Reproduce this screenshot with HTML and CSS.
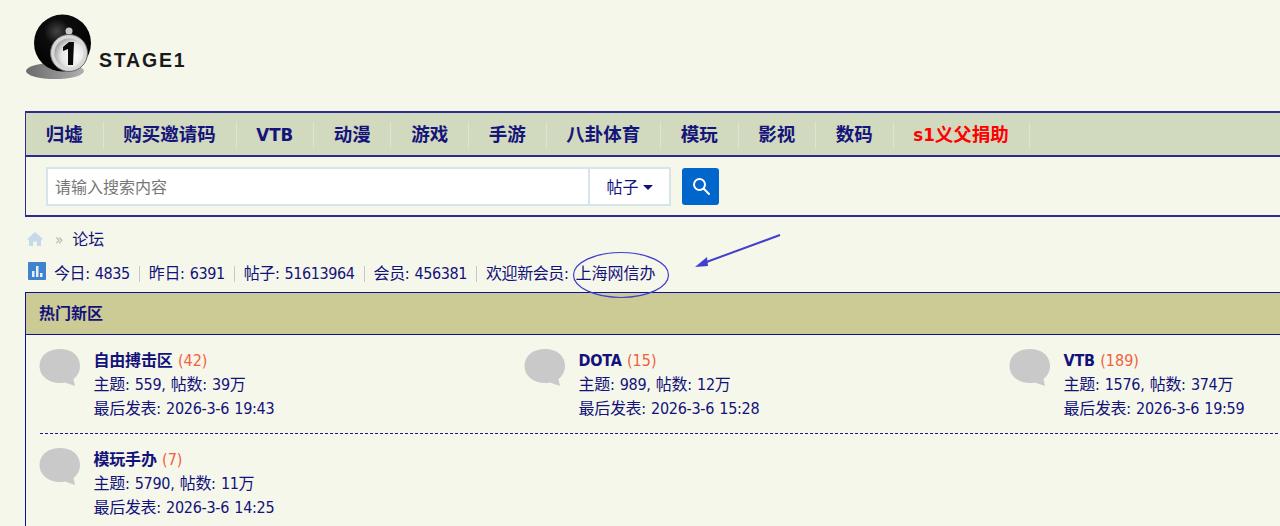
FILE: index.html
```html
<!DOCTYPE html>
<html lang="zh">
<head>
<meta charset="utf-8">
<title>Stage1</title>
<link rel="stylesheet" href="styles.css">
</head>
<body>
<div class="page">
  <header class="logo">
    <svg class="logo-ball" width="70" height="68" viewBox="0 0 70 68">
      <defs>
        <radialGradient id="ball" cx="0.4" cy="0.3" r="0.75">
          <stop offset="0" stop-color="#444"/>
          <stop offset="0.3" stop-color="#0c0c0c"/>
          <stop offset="1" stop-color="#000"/>
        </radialGradient>
        <radialGradient id="face" cx="0.65" cy="0.6" r="0.7">
          <stop offset="0" stop-color="#fff"/>
          <stop offset="0.6" stop-color="#e6e6e6"/>
          <stop offset="1" stop-color="#9a9a9a"/>
        </radialGradient>
        <linearGradient id="shadow" x1="0" x2="1" y1="0" y2="0">
          <stop offset="0" stop-color="#6a6a6a"/>
          <stop offset="1" stop-color="#b0b0b0"/>
        </linearGradient>
      </defs>
      <ellipse cx="30" cy="58" rx="29" ry="8" fill="url(#shadow)"/>
      <circle cx="37.500" cy="30" r="28.500" fill="url(#ball)"/>
      <ellipse cx="44" cy="18" rx="3.500" ry="3.500" fill="#c8c8c8"/>
      <circle cx="44" cy="40" r="18.500" fill="#d8d8d8" stroke="#666" stroke-width="1"/>
      <circle cx="44" cy="40" r="14.500" fill="url(#face)"/>
      <path d="M38 34 L44 29 L49 29 L48 52 L43 52 L43 36 L38 38 Z" fill="#0a0a0a"/>
    </svg>
    <span class="logo-text">STAGE1</span>
  </header>

  <nav class="panel">
    <ul class="menu">
      <li class="menu-item">归墟</li>
      <li class="menu-item">购买邀请码</li>
      <li class="menu-item">VTB</li>
      <li class="menu-item">动漫</li>
      <li class="menu-item">游戏</li>
      <li class="menu-item">手游</li>
      <li class="menu-item">八卦体育</li>
      <li class="menu-item">模玩</li>
      <li class="menu-item">影视</li>
      <li class="menu-item">数码</li>
      <li class="menu-item menu-red">s1义父捐助</li>
    </ul>
    <div class="search">
      <div class="search-box">
        <div class="search-input">请输入搜索内容</div>
        <div class="search-type">帖子<span class="caret"></span></div>
      </div>
      <div class="search-btn">
        <svg width="20" height="20" viewBox="0 0 20 20" fill="none" stroke="#fff" stroke-width="2" stroke-linecap="round">
          <circle cx="8.500" cy="8.500" r="5.500"/>
          <path d="M12.800 12.800 L18 18"/>
        </svg>
      </div>
    </div>
  </nav>

  <div class="crumb">
    <svg class="crumb-home" width="18" height="16" viewBox="0 0 18 16"><path d="M9 1 L17.500 8.500 L15 8.500 L15 15 L10.800 15 L10.800 10.500 L7.200 10.500 L7.200 15 L3 15 L3 8.500 L0.500 8.500 Z" fill="#c5d9ea"/></svg>
    <span class="crumb-sep">»</span>
    <span>论坛</span>
  </div>

  <div class="stats">
    <svg class="stats-icon" width="18" height="18" viewBox="0 0 18 18"><rect width="18" height="18" rx="1" fill="#3f83cc"/><path d="M4 9h2.500v6H4zM8 4h2.500v11H8zM12 11h2.500v4H12z" fill="#e6f0fa"/></svg>
    <span class="stat">今日: 4835</span><span class="stat">昨日: 6391</span><span class="stat">帖子: 51613964</span><span class="stat">会员: 456381</span><span class="stat stat-last">欢迎新会员:<span class="new-member">上海网信办</span></span>
    <svg class="note" width="230" height="60" viewBox="0 0 230 60" fill="none" stroke="#4040cc">
      <ellipse cx="48" cy="37" rx="47.500" ry="22.500" stroke-width="1.200"/>
      <path d="M207 -3 L128 26" stroke-width="2"/>
      <path d="M122 29 L134 19 L135 28 Z" fill="#4040cc" stroke="none"/>
    </svg>
  </div>

  <section class="board">
    <h2 class="board-title">热门新区</h2>
    <div class="forums">
      <div class="forum">
        <svg class="bubble" width="42" height="38" viewBox="0 0 42 38"><path d="M21 0C32.500 0 41 6.500 41 17C41 23 38 27.500 34.500 30L36 37L26 33.500C24.500 34 22.500 34 21 34C9.500 34 0.500 27 0.500 17C0.500 6.500 9.500 0 21 0Z" fill="#c9c9c9"/></svg>
        <div class="forum-text">
          <div class="forum-name"><b>自由搏击区</b> <span class="count">(42)</span></div>
          <div>主题: 559, 帖数: 39万</div>
          <div>最后发表: 2026-3-6 19:43</div>
        </div>
      </div>
      <div class="forum">
        <svg class="bubble" width="42" height="38" viewBox="0 0 42 38"><path d="M21 0C32.500 0 41 6.500 41 17C41 23 38 27.500 34.500 30L36 37L26 33.500C24.500 34 22.500 34 21 34C9.500 34 0.500 27 0.500 17C0.500 6.500 9.500 0 21 0Z" fill="#c9c9c9"/></svg>
        <div class="forum-text">
          <div class="forum-name"><b>DOTA</b> <span class="count">(15)</span></div>
          <div>主题: 989, 帖数: 12万</div>
          <div>最后发表: 2026-3-6 15:28</div>
        </div>
      </div>
      <div class="forum">
        <svg class="bubble" width="42" height="38" viewBox="0 0 42 38"><path d="M21 0C32.500 0 41 6.500 41 17C41 23 38 27.500 34.500 30L36 37L26 33.500C24.500 34 22.500 34 21 34C9.500 34 0.500 27 0.500 17C0.500 6.500 9.500 0 21 0Z" fill="#c9c9c9"/></svg>
        <div class="forum-text">
          <div class="forum-name"><b>VTB</b> <span class="count">(189)</span></div>
          <div>主题: 1576, 帖数: 374万</div>
          <div>最后发表: 2026-3-6 19:59</div>
        </div>
      </div>
      <div class="divider"></div>
      <div class="forum">
        <svg class="bubble" width="42" height="38" viewBox="0 0 42 38"><path d="M21 0C32.500 0 41 6.500 41 17C41 23 38 27.500 34.500 30L36 37L26 33.500C24.500 34 22.500 34 21 34C9.500 34 0.500 27 0.500 17C0.500 6.500 9.500 0 21 0Z" fill="#c9c9c9"/></svg>
        <div class="forum-text">
          <div class="forum-name"><b>模玩手办</b> <span class="count">(7)</span></div>
          <div>主题: 5790, 帖数: 11万</div>
          <div>最后发表: 2026-3-6 14:25</div>
        </div>
      </div>
    </div>
  </section>
</div>
</body>
</html>
```

FILE: styles.css
```css
* { box-sizing: border-box; }
html, body { margin: 0; height: 526px; overflow: hidden; background: #f6f7eb; }
body {
  color: #12127a;
  font: 16px/24px "DejaVu Sans Condensed", "Noto Sans CJK SC", sans-serif;
}
.page { width: 1500px; padding-left: 25px; }
.logo { height: 111px; padding-top: 13px; display: flex; align-items: flex-start; }
.logo-ball { flex: none; }
.logo-text {
  margin: 36px 0 0 4px;
  font: bold 19.500px/22px "Liberation Sans", sans-serif;
  letter-spacing: 1.800px;
  color: #1a1a1a;
}
.panel { border: 1px solid #2b2b92; border-top-width: 2px; border-bottom-width: 2px; width: 1300px; }
.menu {
  list-style: none;
  margin: 0;
  padding: 9px 0;
  height: 44px;
  display: flex;
  background: #d1d9bf;
  border-bottom: 2px solid #2b2b92;
}
.menu-item {
  height: 26px;
  padding: 1px 19.750px 0;
  font-size: 18.500px;
  line-height: 24px;
  font-weight: bold;
  color: #14147a;
  border-right: 1px solid #e0e5d2;
}
.menu-red { color: #f00; }
.search { display: flex; gap: 11px; height: 58px; padding: 10px 20px; align-items: center; }
.search-box { display: flex; width: 625px; height: 39px; border: 2px solid #d6e4ec; background: #fff; }
.search-input { flex: 1; padding: 1px 0 0 7px; color: #777; line-height: 35px; border-right: 2px solid #d6e4ec; }
.search-type { width: 79px; padding-top: 1px; text-align: center; line-height: 35px; color: #12127a; }
.caret {
  display: inline-block;
  margin-left: 4px;
  vertical-align: 3px;
  border: 5px solid transparent;
  border-top-color: #12127a;
  border-bottom: 0;
}
.search-btn {
  width: 37px;
  height: 37px;
  background: #0066cc;
  border-radius: 3px;
  display: flex;
  align-items: center;
  justify-content: center;
}
.crumb { display: flex; align-items: center; height: 24px; margin-top: 11px; padding-left: 1px; }
.crumb-home { margin-top: -3px; }
.crumb-sep { color: #b0b4b4; margin: 0 9px 0 11px; font-size: 15px; }
.stats { position: relative; display: flex; align-items: center; height: 24px; margin-top: 10px; line-height: 24px; padding-left: 3px; letter-spacing: -0.400px; word-spacing: 1px; }
.stats-icon { margin: -6px 8px 0 0; flex: none; }
.stat { padding-right: 9px; margin-right: 9px; border-right: 1px solid #c8c8c8; line-height: 16px; }
.stat-last { border: 0; padding: 0; margin: 0; }
.new-member { margin-left: 7px; letter-spacing: 0; }
.note { position: absolute; left: 548px; top: -24px; overflow: visible; }
.board { margin-top: 6px; border: 1px solid #10109a; border-width: 1px 0 0 1px; width: 1300px; }
.board-title {
  margin: 0;
  height: 42px;
  padding-left: 13px;
  line-height: 42px;
  font-size: 16px;
  background: #cccb96;
  border-bottom: 1px solid #10109a;
}
.forums { display: grid; grid-template-columns: repeat(3, 485px); padding: 14px 0 0 14px; }
.forum { display: flex; gap: 12.500px; height: 83px; }
.bubble { flex: none; margin: 0 0 0 -1px; }
.forum-text { line-height: 24px; letter-spacing: -0.300px; word-spacing: 1px; }
.forum-name { letter-spacing: -0.200px; }
.count { color: #f2603c; letter-spacing: 0; }
.divider { grid-column: 1 / -1; width: 1238px; border-top: 1px dashed #1a1a8a; height: 15px; margin-top: 1px; }
```
